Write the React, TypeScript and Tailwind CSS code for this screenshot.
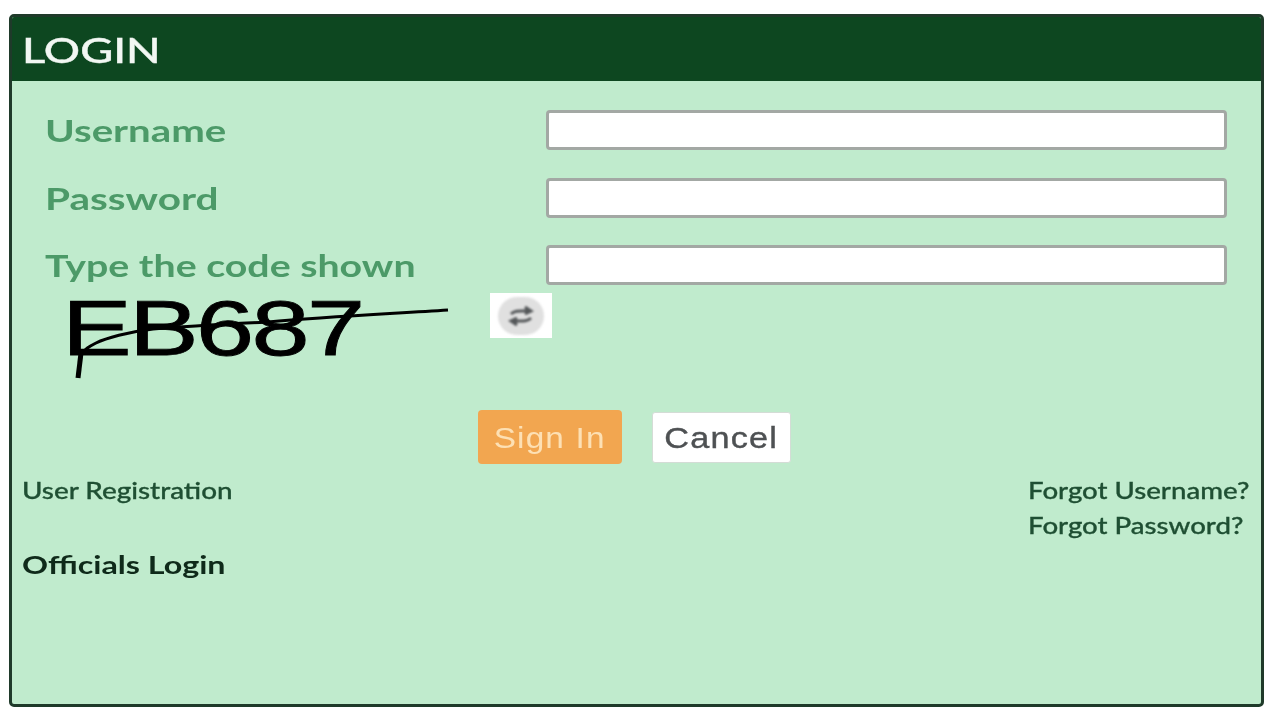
function Field({ label, stretch }: { label: string; stretch: string }) {
  return (
    <div className="flex items-center h-[40px] pl-[33px] pr-[34px]">
      <label className="flex-1 text-[30px] font-bold text-[#4c9a68] leading-none">
        <span className={`inline-block origin-left ${stretch} blur-[0.4px]`}>{label}</span>
      </label>
      <input
        type="text"
        className="w-[681px] h-[40px] bg-white border-[3px] border-[#a3a8a4] rounded-[4px] blur-[0.7px] outline-none"
      />
    </div>
  );
}

function Captcha() {
  return (
    <div className="relative w-[400px] h-[90px] ml-[54px]">
      <span className="block -ml-[4px] origin-left scale-x-[1.34] font-['Liberation_Sans',sans-serif] text-[78px] leading-[70px] text-black tracking-[-2px] [-webkit-text-stroke:0.8px_#000] blur-[0.5px]">
        EB687
      </span>
      {/* noise strokes over the code */}
      <svg className="absolute left-0 top-0 blur-[0.4px]" width="400" height="90" viewBox="0 0 400 90" fill="none" stroke="#000">
        <path d="M382 17 C320 21 260 24 202 29 C160 31 120 33 87 36 C62 39 40 45 30 50 C24 53 18 56 15 62" strokeWidth="3" />
        <path d="M15 60 L12 85" strokeWidth="5" />
      </svg>
    </div>
  );
}

function RefreshButton() {
  return (
    <button className="flex items-center justify-center w-[62px] h-[45px] bg-white">
      <span className="flex items-center justify-center w-[46px] h-[38px] rounded-full bg-[#e0e0e0] blur-[1px]">
        <svg width="26" height="22" viewBox="0 0 26 22" fill="none" stroke="#55585a" strokeWidth="3">
          <path d="M3 9 C7 5 12 6 20 6" />
          <path d="M17 2 L23 6 L17 9" fill="#55585a" />
          <path d="M23 13 C19 17 14 16 6 16" />
          <path d="M9 13 L3 16 L9 20" fill="#55585a" />
        </svg>
      </span>
    </button>
  );
}

export default function App() {
  return (
    <div className="h-[721px] w-[1280px] bg-white pt-[14px] pl-[9px] font-['Lato',sans-serif] overflow-hidden">
      <div className="w-[1255px] h-[693px] border-[3px] border-[#1f3a2a] rounded-[5px] bg-[#c0ebcd] overflow-hidden">
        <div className="h-[64px] pt-[2px] bg-[#0d4720] flex items-center pl-[10px] text-[34px] font-medium text-[#f2f7f3] leading-none [-webkit-text-stroke:0.4px_#f2f7f3]">
          <span className="inline-block origin-left scale-x-[1.33] blur-[0.3px]">LOGIN</span>
        </div>

        <div className="flex flex-col gap-[27.5px] pt-[29px]">
          <Field label="Username" stretch="scale-x-[1.34]" />
          <Field label="Password" stretch="scale-x-[1.35]" />
          <Field label="Type the code shown" stretch="scale-x-[1.31]" />
        </div>

        <div className="flex items-start mt-[8px]">
          <Captcha />
          <div className="ml-[24px]">
            <RefreshButton />
          </div>
        </div>

        <div className="flex items-center gap-[30px] pl-[466px] mt-[27px]">
          <button className="w-[144px] h-[54px] pt-[3px] rounded-[4px] bg-[#f2a650] text-[#fde0b4] text-[29px] font-['Liberation_Sans',sans-serif] tracking-[1px] blur-[0.4px]">
            <span className="inline-block scale-x-[1.15]">Sign In</span>
          </button>
          <button className="w-[139px] h-[51px] pt-[3px] rounded-[3px] bg-white border border-[#d4dcd6] text-[#4e5153] text-[29px] font-['Liberation_Sans',sans-serif] tracking-[1px] [-webkit-text-stroke:0.4px_#4e5153] blur-[0.4px]">
            <span className="inline-block scale-x-[1.18]">Cancel</span>
          </button>
        </div>

        <div className="flex justify-between pl-[10px] pr-[11px] mt-[9px] text-[23px] font-medium text-[#1f4f33] leading-[35px] [-webkit-text-stroke:0.3px_#1f4f33]">
          <a className="inline-block origin-left scale-x-[1.21] blur-[0.4px]">User Registration</a>
          <div className="flex flex-col w-[222px]">
            <a className="inline-block origin-left scale-x-[1.2] blur-[0.4px]">Forgot Username?</a>
            <a className="inline-block origin-left scale-x-[1.2] blur-[0.4px]">Forgot Password?</a>
          </div>
        </div>

        <div className="pl-[10px] mt-[1px] text-[25px] font-bold text-[#0f2a1a] leading-[40px]">
          <span className="inline-block origin-left scale-x-[1.29] blur-[0.4px]">Officials Login</span>
        </div>
      </div>
    </div>
  );
}
